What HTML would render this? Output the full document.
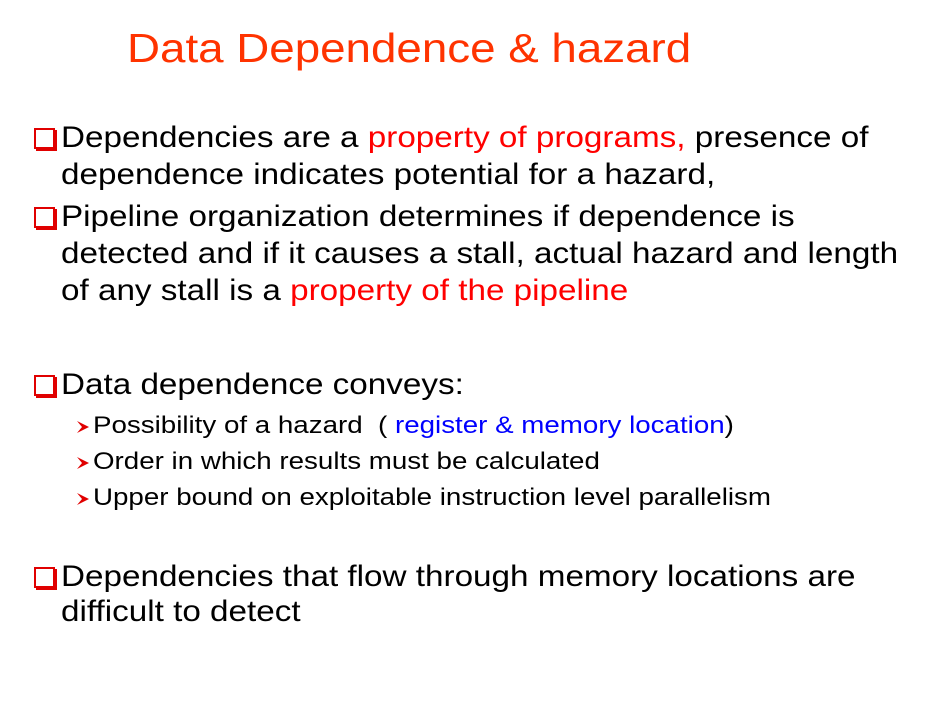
<!DOCTYPE html>
<html><head><meta charset="utf-8"><style>
body{margin:0;width:940px;height:706px;background:#fff;position:relative;overflow:hidden;font-family:"Liberation Sans",Arial,sans-serif;}
.l{position:absolute;white-space:nowrap;font-size:30px;line-height:36px;color:#000;transform:scaleX(1.108);transform-origin:0 0;}
.s{position:absolute;white-space:nowrap;font-size:24px;line-height:30px;color:#000;transform:scaleX(1.155);transform-origin:0 0;}
.r{color:#ff0000}.b{color:#0000ff}
.box{position:absolute;width:17px;height:17px;border:2px solid #e00000;box-shadow:2px 2px 0 #e00000;background:#fff;}
.arr{position:absolute;width:14px;height:14px;}
</style></head><body>
<div class="l" style="left:127px;top:24px;font-size:41px;line-height:48px;color:#ff3300;transform:scaleX(1.115);">Data Dependence &amp; hazard</div>

<div class="box" style="left:34px;top:128px"></div>
<div class="l" style="left:61px;top:120px">Dependencies are a <span class="r">property of programs,</span> presence of</div>
<div class="l" style="left:61px;top:157px">dependence indicates potential for a hazard,</div>

<div class="box" style="left:34px;top:207px"></div>
<div class="l" style="left:61px;top:199px">Pipeline organization determines if dependence is</div>
<div class="l" style="left:61px;top:236px">detected and if it causes a stall, actual hazard and length</div>
<div class="l" style="left:61px;top:273px">of any stall is a <span class="r">property of the pipeline</span></div>

<div class="box" style="left:34px;top:375px"></div>
<div class="l" style="left:61px;top:367px">Data dependence conveys:</div>

<svg class="arr" style="left:76px;top:420px" viewBox="0 0 14 14"><path d="M1 1L13 7L1 13L6 7Z" fill="#e00000"/></svg>
<div class="s" style="left:93px;top:411px">Possibility of a hazard&nbsp; ( <span class="b">register &amp; memory location</span>)</div>
<svg class="arr" style="left:76px;top:456px" viewBox="0 0 14 14"><path d="M1 1L13 7L1 13L6 7Z" fill="#e00000"/></svg>
<div class="s" style="left:93px;top:447px">Order in which results must be calculated</div>
<svg class="arr" style="left:76px;top:492px" viewBox="0 0 14 14"><path d="M1 1L13 7L1 13L6 7Z" fill="#e00000"/></svg>
<div class="s" style="left:93px;top:483px">Upper bound on exploitable instruction level parallelism</div>

<div class="box" style="left:34px;top:567px"></div>
<div class="l" style="left:61px;top:559px">Dependencies that flow through memory locations are</div>
<div class="l" style="left:61px;top:594px">difficult to detect</div>
</body></html>
